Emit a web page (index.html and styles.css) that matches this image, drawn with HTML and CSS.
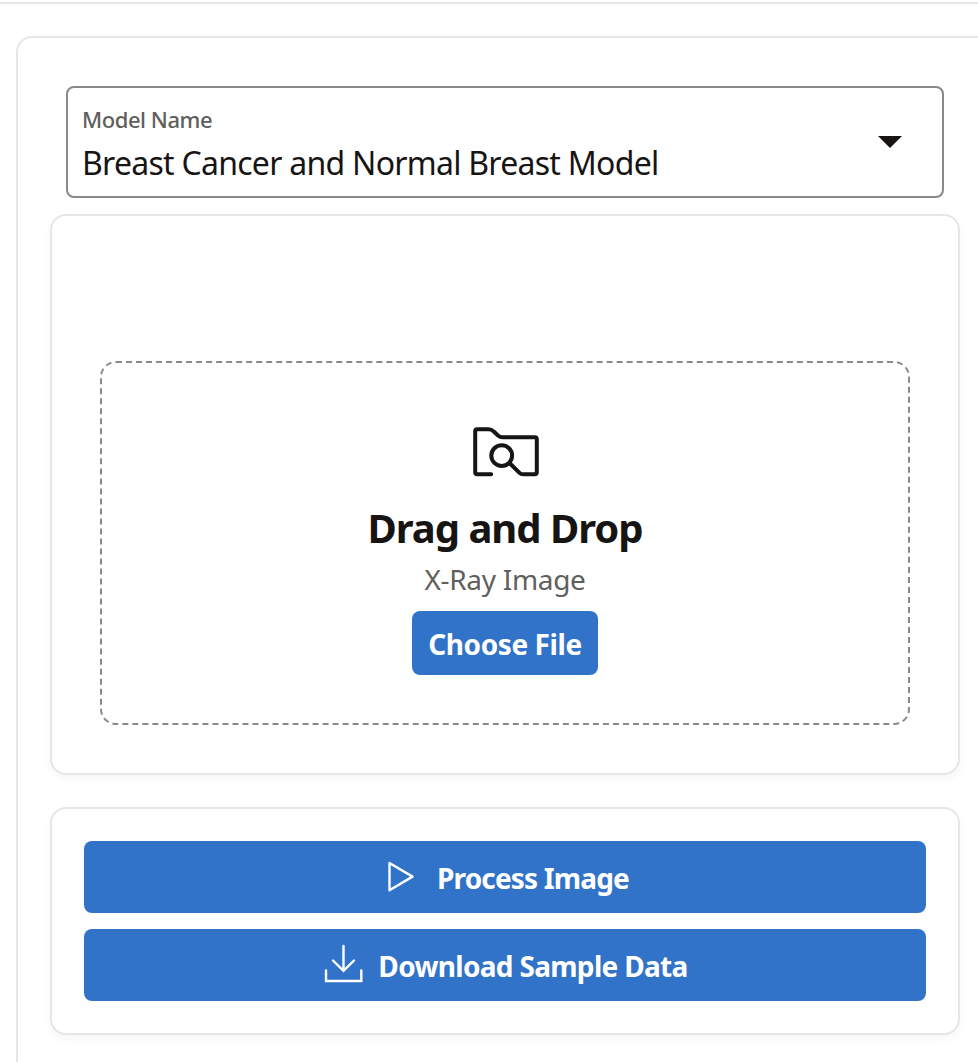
FILE: index.html
```html
<!DOCTYPE html>
<html lang="en">
<head>
<meta charset="utf-8">
<title>Model Image Processing</title>
<link rel="stylesheet" href="styles.css">
</head>
<body>
<main class="page">
  <section class="panel">
    <div class="select" role="combobox" aria-expanded="false" tabindex="0">
      <div class="select-text">
        <span class="select-label">Model Name</span>
        <span class="select-value">Breast Cancer and Normal Breast Model</span>
      </div>
      <svg class="caret" viewBox="0 0 24 12"><path d="M0 0H24L12 12Z" fill="currentColor"/></svg>
    </div>
    <div class="card upload">
      <div class="dropzone">
        <svg class="folder-icon" viewBox="0 0 66 50" fill="none" stroke="currentColor" stroke-width="4" stroke-linecap="round" stroke-linejoin="round">
          <path d="M18.2 47.3H4.2Q2.2 47.3 2.2 45.3V4.3Q2.2 2.3 4.2 2.3H15.5Q18.5 2.3 20.5 4.3L25 8.5Q27 10.2 29.5 10.2H61.8Q63.8 10.2 63.8 12.2V45.3Q63.8 47.3 61.8 47.3H50Q48 47.3 46.5 45.8L36.5 36"/>
          <circle cx="28.7" cy="28.6" r="10.4"/>
        </svg>
        <h2 class="drop-title">Drag and Drop</h2>
        <p class="drop-sub">X-Ray Image</p>
        <button class="btn choose"><span class="choose-text">Choose File</span></button>
      </div>
    </div>
    <div class="card actions">
      <button class="btn action">
        <svg class="btn-icon" viewBox="0 0 40 40" fill="none" stroke="currentColor" stroke-width="2.4" stroke-linejoin="round"><path d="M8.5 6V33.2L31.5 19.6Z"/></svg>
        <span class="process-text">Process Image</span>
      </button>
      <button class="btn action">
        <svg class="btn-icon" viewBox="0 0 40 40" fill="none" stroke="currentColor" stroke-width="2.4" stroke-linecap="round"><path d="M21.5 1V25.8M11 15.5L21.5 25.8L32 15.5M4 25.5V36H39.3V25.5"/></svg>
        <span class="download-text">Download Sample Data</span>
      </button>
    </div>
  </section>
</main>
</body>
</html>
```
FILE: styles.css
```css
* { box-sizing: border-box; }
body {
  margin: 0;
  background: #fff;
  color: #161513;
  font-family: "Noto Sans", sans-serif;
  overflow: hidden;
}
.page {
  height: 1060px;
  margin-top: 2px;
  padding: 32px 0 0 16px;
  border-top: 2px solid #e6e6e6;
  overflow: hidden;
}
.panel {
  height: 1100px;
  padding: 48px 18px 0 32px;
  border: 2px solid #e6e6e6;
  border-right: 0;
  border-radius: 16px 0 0 0;
}
.select {
  display: flex;
  justify-content: space-between;
  height: 112px;
  margin: 0 16px 16px;
  padding: 19px 40px 0 14px;
  border: 2px solid #8a8988;
  border-radius: 8px;
}
.select-text { display: flex; flex-direction: column; white-space: nowrap; }
.select-label { height: 34px; font-size: 22px; line-height: 24px; font-weight: 500; letter-spacing: -.45px; color: #605f5e; }
.select-value { font-size: 32px; line-height: 44px; letter-spacing: -.73px; }
.caret { width: 24px; height: 12px; margin-top: 29px; }
.card {
  border: 2px solid #e6e6e6;
  border-radius: 16px;
  background: #fff;
  box-shadow: 0 4px 8px rgba(0, 0, 0, .04);
}
.upload { height: 561px; padding: 145px 48px 0; margin-bottom: 32px; }
.dropzone {
  display: flex;
  flex-direction: column;
  align-items: center;
  height: 364px;
  padding-top: 64px;
  border: 2px dashed #8a8988;
  border-radius: 16px;
}
.folder-icon { width: 66px; height: 50px; margin-left: 2px; }
.drop-title { margin: 27px 0 7px; font-size: 40px; line-height: 48px; font-weight: 700; letter-spacing: -1.02px; }
.drop-sub { margin: 0 0 12px; font-size: 28px; line-height: 40px; letter-spacing: -.3px; color: #605f5e; }
.btn {
  display: flex;
  align-items: center;
  justify-content: center;
  padding: 0;
  border: 0;
  border-radius: 8px;
  background: #3173c8;
  color: #fff;
  font: 700 28px/40px "Noto Sans", sans-serif;
  white-space: nowrap;
}
.btn span { padding-top: 1px; }
.choose { width: 186px; height: 64px; }
.choose-text { letter-spacing: -.42px; }
.actions {
  display: flex;
  flex-direction: column;
  gap: 16px;
  height: 228px;
  padding: 32px;
}
.action { gap: 16px; height: 72px; }
.process-text { letter-spacing: -.83px; }
.download-text { letter-spacing: -.68px; }
.btn-icon { width: 40px; height: 40px; overflow: visible; }
```
